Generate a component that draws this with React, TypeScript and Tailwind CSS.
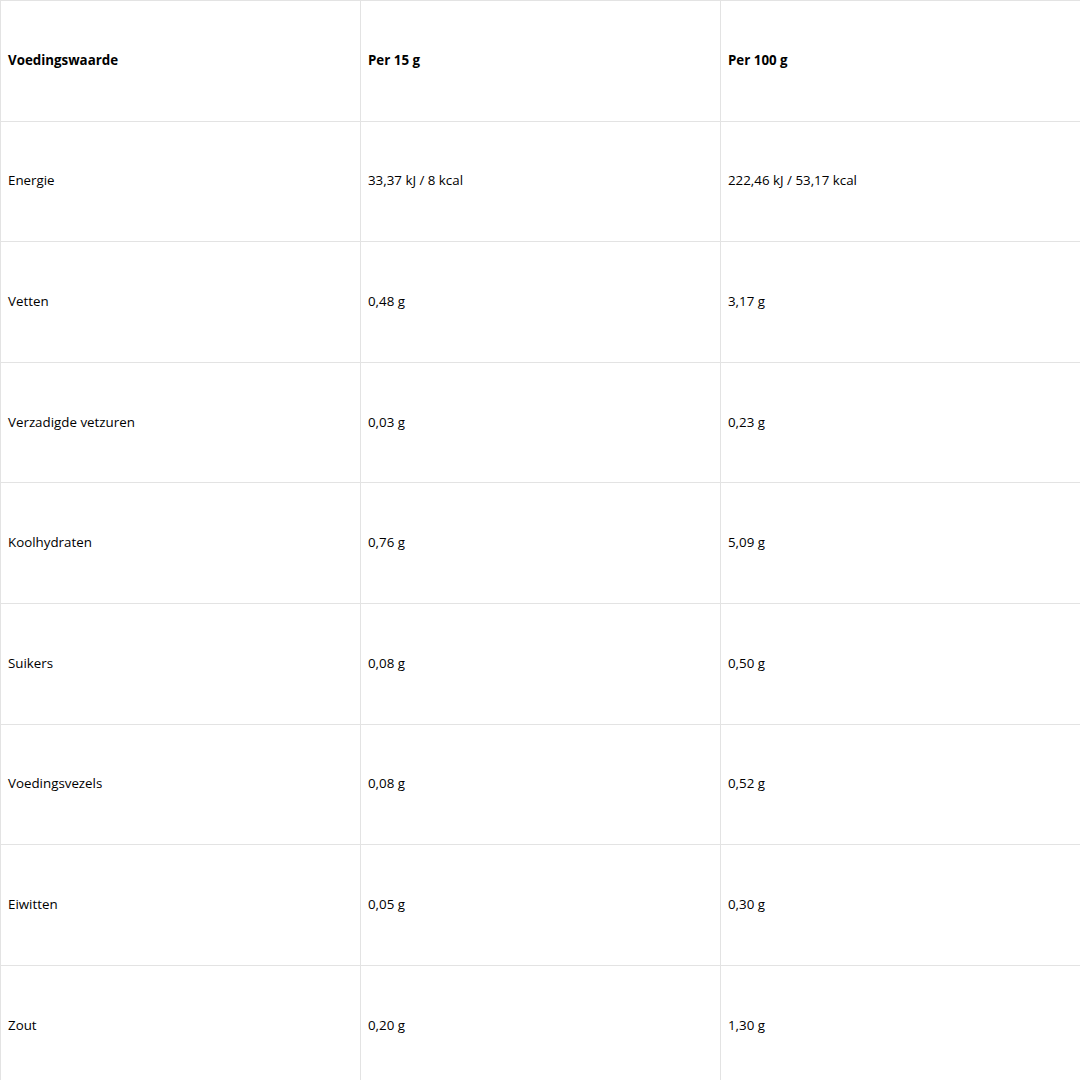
import React from "react";

const rows: [string, string, string][] = [
  ["Energie", "33,37 kJ / 8 kcal", "222,46 kJ / 53,17 kcal"],
  ["Vetten", "0,48 g", "3,17 g"],
  ["Verzadigde vetzuren", "0,03 g", "0,23 g"],
  ["Koolhydraten", "0,76 g", "5,09 g"],
  ["Suikers", "0,08 g", "0,50 g"],
  ["Voedingsvezels", "0,08 g", "0,52 g"],
  ["Eiwitten", "0,05 g", "0,30 g"],
  ["Zout", "0,20 g", "1,30 g"],
];

export default function App() {
  return (
    <div className="bg-white w-[1080px] h-[1080px] overflow-hidden" style={{ fontFamily: '"Open Sans", sans-serif' }}>
      <table className="w-[1080px] border-collapse table-fixed text-[13.33px] text-black">
        <tbody>
          <tr className="h-[120.6px]">
            <th className="border border-[#e3e3e3] pl-[7px] pr-2 text-left font-bold w-[360px]">Voedingswaarde</th>
            <th className="border border-[#e3e3e3] pl-[7px] pr-2 text-left font-bold w-[360px]">Per 15 g</th>
            <th className="border border-[#e3e3e3] pl-[7px] pr-2 text-left font-bold w-[360px]">Per 100 g</th>
          </tr>
          {rows.map((r) => (
            <tr key={r[0]} className="h-[120.6px]">
              {r.map((c, i) => (
                <td key={i} className="border border-[#e3e3e3] pl-[7px] pr-2 align-middle font-normal">
                  {c}
                </td>
              ))}
            </tr>
          ))}
        </tbody>
      </table>
    </div>
  );
}
